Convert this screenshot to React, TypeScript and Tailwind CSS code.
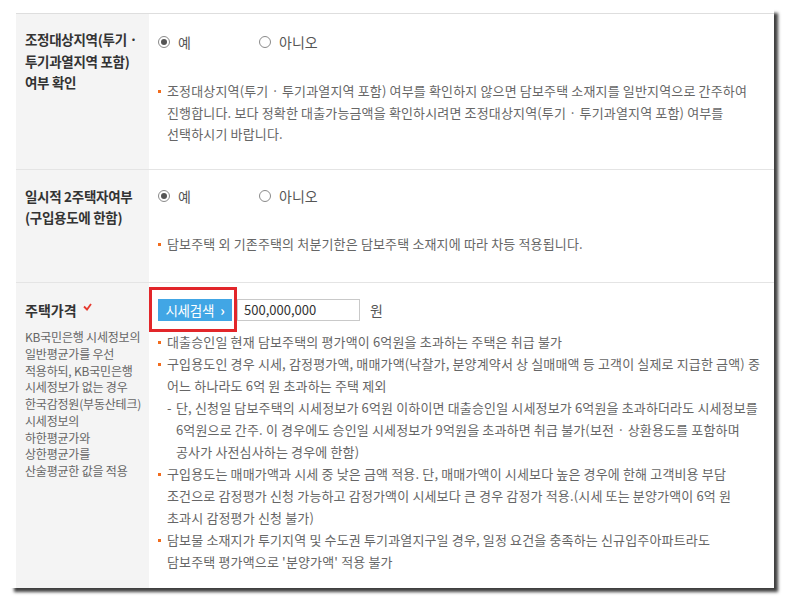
import React from "react";

const ROW1_NOTE = [
  "조정대상지역(투기 · 투기과열지역 포함) 여부를 확인하지 않으면 담보주택 소재지를 일반지역으로 간주하여",
  "진행합니다. 보다 정확한 대출가능금액을 확인하시려면 조정대상지역(투기 · 투기과열지역 포함) 여부를",
  "선택하시기 바랍니다.",
];

const PRICE_DESC = [
  "KB국민은행 시세정보의",
  "일반평균가를 우선",
  "적용하되, KB국민은행",
  "시세정보가 없는 경우",
  "한국감정원(부동산테크)",
  "시세정보의",
  "하한평균가와",
  "상한평균가를",
  "산술평균한 값을 적용",
];

function Lines({ lines }: { lines: string[] }) {
  return (
    <div>
      {lines.map((l) => (
        <div key={l} className="whitespace-nowrap">
          {l}
        </div>
      ))}
    </div>
  );
}

function Bullet({ lines }: { lines: string[] }) {
  return (
    <div className="flex">
      <span className="w-[9px] shrink-0 pt-[10px]">
        <span className="block w-[3px] h-[3px] bg-[#f26c1d]" />
      </span>
      <Lines lines={lines} />
    </div>
  );
}

function Dash({ lines }: { lines: string[] }) {
  return (
    <div className="flex pl-[9px]">
      <span className="w-[9px] shrink-0">-</span>
      <Lines lines={lines} />
    </div>
  );
}

function Radio({ checked, label, wide }: { checked?: boolean; label: string; wide?: boolean }) {
  return (
    <label className={`flex items-center gap-[8px] ${wide ? "w-[101px]" : ""}`}>
      <span className="w-[12px] h-[12px] rounded-full border border-[#8a8a8a] bg-white flex items-center justify-center">
        {checked && <span className="w-[6px] h-[6px] rounded-full bg-[#555]" />}
      </span>
      <span>{label}</span>
    </label>
  );
}

function RadioRow() {
  return (
    <div className="flex items-center h-[22px] text-[14px] text-[#555]">
      <Radio checked label="예" wide />
      <Radio label="아니오" />
    </div>
  );
}

export default function App() {
  return (
    <div className="w-[786px] h-[600px] bg-white pt-[9px] pl-[10px] font-['Noto_Sans_CJK_KR','Liberation_Sans',sans-serif]">
      <div className="w-[764px] h-[579px] bg-white pl-[6px] pt-[4px] shadow-[4px_4px_3px_rgba(0,0,0,0.75)] flex flex-col">
        <div className="flex-1 flex flex-col border-t border-[#dedede]">
          {/* 조정대상지역 */}
          <div className="h-[156px] grid grid-cols-[133px_1fr] border-b border-[#e4e4e4]">
            <div className="bg-[#f4f4f4] pl-[9px] pt-[15px] text-[13.5px] leading-[21.5px] font-bold text-[#333] tracking-[-0.3px]">
              <Lines lines={["조정대상지역(투기 ·", "투기과열지역 포함)", "여부 확인"]} />
            </div>
            <div className="pl-[9px] pt-[17px]">
              <RadioRow />
              <div className="mt-[27px] text-[13px] leading-[21.5px] text-[#666] tracking-[0.15px]">
                <Bullet lines={ROW1_NOTE} />
              </div>
            </div>
          </div>

          {/* 일시적 2주택자여부 */}
          <div className="h-[113px] grid grid-cols-[133px_1fr] border-b border-[#e4e4e4]">
            <div className="bg-[#f4f4f4] pl-[9px] pt-[16px] text-[13.5px] leading-[21px] font-bold text-[#333] tracking-[-0.3px]">
              <Lines lines={["일시적 2주택자여부", "(구입용도에 한함)"]} />
            </div>
            <div className="pl-[9px] pt-[15px]">
              <RadioRow />
              <div className="mt-[26px] text-[13px] leading-[22px] text-[#666] tracking-[0.15px]">
                <Bullet lines={["담보주택 외 기존주택의 처분기한은 담보주택 소재지에 따라 차등 적용됩니다."]} />
              </div>
            </div>
          </div>

          {/* 주택가격 */}
          <div className="flex-1 grid grid-cols-[133px_1fr]">
            <div className="bg-[#f4f4f4] pl-[9px] pt-[16px]">
              <div className="flex items-center gap-[6px] text-[14px] leading-[22px] font-bold text-[#333]">
                <span>주택가격</span>
                <svg width="9" height="8" viewBox="0 0 9 8" className="mt-[-6px]">
                  <polyline points="1,3.5 4,6.5 8,1" fill="none" stroke="#e53a2f" strokeWidth="1.8" />
                </svg>
              </div>
              <div className="mt-[8px] text-[12px] leading-[16.75px] text-[#666] tracking-[-0.2px]">
                <Lines lines={PRICE_DESC} />
              </div>
            </div>
            <div className="pl-[9px] pt-[16px]">
              <div className="flex items-center h-[22px]">
                <div className="relative">
                  <button className="h-[22px] w-[74px] bg-[#41a6e5] text-white text-[13.5px] flex items-center justify-center gap-[6px] tracking-[-0.2px]">
                    <span>시세검색</span>
                    <span className="font-bold text-[14px] leading-none">›</span>
                  </button>
                  <span className="absolute left-[-9px] top-[-12px] w-[88px] h-[45px] border-[3px] border-[#e2262a]" />
                </div>
                <div className="ml-[5px] w-[123px] h-[22px] border border-[#c9c9c9] flex items-center pl-[6px] text-[13px] text-[#333]">
                  500,000,000
                </div>
                <span className="ml-[10px] text-[14px] text-[#555]">원</span>
              </div>
              <div className="mt-[10px] text-[13px] leading-[22px] text-[#666] tracking-[0.15px]">
                <Bullet lines={["대출승인일 현재 담보주택의 평가액이 6억원을 초과하는 주택은 취급 불가"]} />
                <Bullet
                  lines={[
                    "구입용도인 경우 시세, 감정평가액, 매매가액(낙찰가, 분양계약서 상 실매매액 등 고객이 실제로 지급한 금액) 중",
                    "어느 하나라도 6억 원 초과하는 주택 제외",
                  ]}
                />
                <Dash
                  lines={[
                    "단, 신청일 담보주택의 시세정보가 6억원 이하이면 대출승인일 시세정보가 6억원을 초과하더라도 시세정보를",
                    "6억원으로 간주. 이 경우에도 승인일 시세정보가 9억원을 초과하면 취급 불가(보전 · 상환용도를 포함하며",
                    "공사가 사전심사하는 경우에 한함)",
                  ]}
                />
                <Bullet
                  lines={[
                    "구입용도는 매매가액과 시세 중 낮은 금액 적용. 단, 매매가액이 시세보다 높은 경우에 한해 고객비용 부담",
                    "조건으로 감정평가 신청 가능하고 감정가액이 시세보다 큰 경우 감정가 적용.(시세 또는 분양가액이 6억 원",
                    "초과시 감정평가 신청 불가)",
                  ]}
                />
                <Bullet
                  lines={[
                    "담보물 소재지가 투기지역 및 수도권 투기과열지구일 경우, 일정 요건을 충족하는 신규입주아파트라도",
                    "담보주택 평가액으로 '분양가액' 적용 불가",
                  ]}
                />
              </div>
            </div>
          </div>
        </div>
      </div>
    </div>
  );
}
